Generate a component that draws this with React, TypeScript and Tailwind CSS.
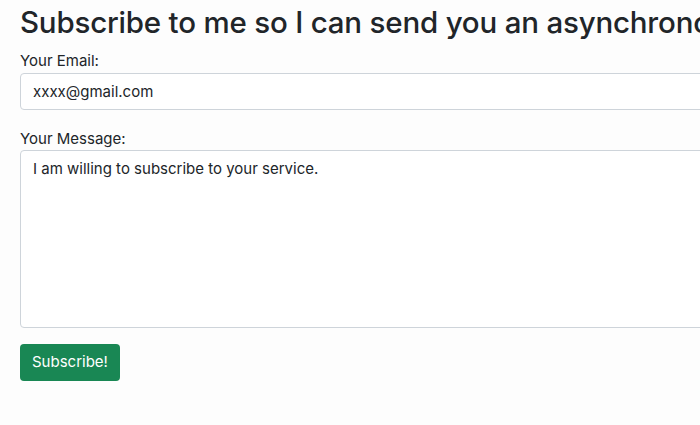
export default function App() {
    return (
        <div
            className="h-[425px] w-[700px] overflow-hidden bg-[#fdfdfd] pl-5 text-[#212529]"
            style={{ fontFamily: 'Inter, "Liberation Sans", Arial, sans-serif' }}
        >
            {/* Title runs off the right edge like in the screenshot */}
            <h1 className="whitespace-nowrap text-[29.5px] leading-[45px] font-medium tracking-[-0.2px]">
                Subscribe to me so I can send you an asynchronous message
            </h1>

            <form className="w-[720px]">
                <label className="mt-[6px] block text-[15px] leading-[20px]">Your Email:</label>
                <input
                    type="text"
                    defaultValue="xxxx@gmail.com"
                    className="mt-[2px] block h-[37px] w-full rounded-[4px] border border-[#ced4da] bg-white px-3 text-[15px] text-[#212529] outline-none"
                />

                <label className="mt-[19px] block text-[15px] leading-[20px]">Your Message:</label>
                <textarea
                    defaultValue="I am willing to subscribe to your service."
                    className="mt-[1px] block h-[178px] w-full resize-none rounded-[4px] border border-[#ced4da] bg-white px-3 py-[7px] text-[15px] leading-[22px] text-[#212529] outline-none"
                />

                <button
                    type="button"
                    className="mt-[16px] block h-[37px] rounded-[4px] bg-[#198754] px-3 text-[15px] text-white"
                >
                    Subscribe!
                </button>
            </form>
        </div>
    );
}
